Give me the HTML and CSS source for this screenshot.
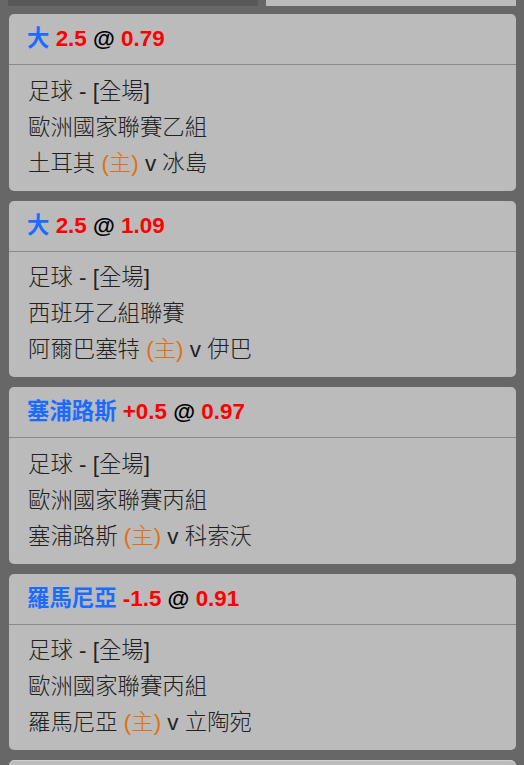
FILE: index.html
```html
<!DOCTYPE html>
<html lang="zh-Hant">
<head>
  <meta charset="UTF-8" />
  <title>注單</title>
  <link rel="stylesheet" href="styles.css">
</head>
<body>

<div class="tabs">
  <div class="tab tab-dark"></div>
  <div class="tab tab-light"></div>
</div>

<div class="list">
  <div class="bet">
    <div class="bet-head">
      <span class="pick">大</span> <span class="odds">2.5</span> @ <span class="odds">0.79</span>
    </div>
    <div class="bet-body">
      <div>足球 - [全場]</div>
      <div>歐洲國家聯賽乙組</div>
      <div>土耳其 <span class="home">(主)</span> v 冰島</div>
    </div>
  </div>

  <div class="bet">
    <div class="bet-head">
      <span class="pick">大</span> <span class="odds">2.5</span> @ <span class="odds">1.09</span>
    </div>
    <div class="bet-body">
      <div>足球 - [全場]</div>
      <div>西班牙乙組聯賽</div>
      <div>阿爾巴塞特 <span class="home">(主)</span> v 伊巴</div>
    </div>
  </div>

  <div class="bet">
    <div class="bet-head">
      <span class="pick">塞浦路斯</span> <span class="odds">+0.5</span> @ <span class="odds">0.97</span>
    </div>
    <div class="bet-body">
      <div>足球 - [全場]</div>
      <div>歐洲國家聯賽丙組</div>
      <div>塞浦路斯 <span class="home">(主)</span> v 科索沃</div>
    </div>
  </div>

  <div class="bet">
    <div class="bet-head">
      <span class="pick">羅馬尼亞</span> <span class="odds">-1.5</span> @ <span class="odds">0.91</span>
    </div>
    <div class="bet-body">
      <div>足球 - [全場]</div>
      <div>歐洲國家聯賽丙組</div>
      <div>羅馬尼亞 <span class="home">(主)</span> v 立陶宛</div>
    </div>
  </div>

  <div class="bet bet-next"></div>
</div>

</body>
</html>
```

FILE: styles.css
```css
body {
  font-family: 'Liberation Sans', 'Noto Sans CJK TC', sans-serif;
  background-color: #676767;
  color: #222;
  margin: 0;
  padding: 0;
}

.tabs {
  display: flex;
  gap: 8px;
  padding: 0 8px;
  height: 6px;
}

.tab {
  flex: 1;
}

.tab-dark {
  background-color: #595959;
}

.tab-light {
  background-color: #bbb;
}

.list {
  display: flex;
  flex-direction: column;
  gap: 10px;
  padding: 8px 8px 0 9px;
}

.bet {
  background-color: #bbb;
  border-radius: 5px;
}

.bet-head {
  height: 50px;
  line-height: 50px;
  padding: 0 18px;
  font-size: 22.4px;
  font-weight: bold;
  color: #000;
  border-bottom: 1px solid #8a8a8a;
}

.pick {
  color: #1a6cff;
}

.odds {
  color: #ff0000;
}

.bet-body {
  padding: 8.5px 19px 9px;
  font-size: 22.4px;
  font-weight: 300;
  line-height: 36px;
}

.home {
  color: #e0700f;
}

.bet-next {
  height: 40px;
  border: 1px solid #d0d0d0;
}
```
